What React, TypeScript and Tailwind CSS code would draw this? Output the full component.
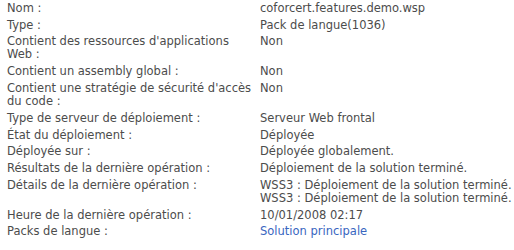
const rows: { label: string; value: string[]; link?: boolean }[] = [
  { label: 'Nom :', value: ['coforcert.features.demo.wsp'] },
  { label: 'Type :', value: ['Pack de langue(1036)'] },
  { label: "Contient des ressources d'applications Web :", value: ['Non'] },
  { label: 'Contient un assembly global :', value: ['Non'] },
  { label: "Contient une stratégie de sécurité d'accès du code :", value: ['Non'] },
  { label: 'Type de serveur de déploiement :', value: ['Serveur Web frontal'] },
  { label: 'État du déploiement :', value: ['Déployée'] },
  { label: 'Déployée sur :', value: ['Déployée globalement.'] },
  { label: 'Résultats de la dernière opération :', value: ['Déploiement de la solution terminé.'] },
  {
    label: 'Détails de la dernière opération :',
    value: ['WSS3 : Déploiement de la solution terminé.', 'WSS3 : Déploiement de la solution terminé.'],
  },
  { label: 'Heure de la dernière opération :', value: ['10/01/2008 02:17'] },
  { label: 'Packs de langue :', value: ['Solution principale'], link: true },
];

export default function App() {
  return (
    <div className="w-[514px] h-[250px] bg-white overflow-hidden font-['DejaVu_Sans',sans-serif] text-[11.5px] leading-[13px] text-[#4c4c4c]">
      <div className="grid grid-cols-[260px_1fr]">
        {rows.map((row) => (
          <div key={row.label} className="contents">
            <div className="pl-[7px] pr-[5px] py-[1.9px]">{row.label}</div>
            <div className="py-[1.9px] whitespace-nowrap">
              {row.value.map((v, i) => (
                <div key={i} className={row.link ? 'text-[#3966bf]' : ''}>
                  {v}
                </div>
              ))}
            </div>
          </div>
        ))}
      </div>
    </div>
  );
}
